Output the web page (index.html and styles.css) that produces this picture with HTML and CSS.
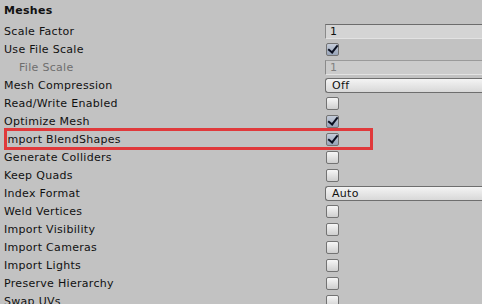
FILE: index.html
```html
<!DOCTYPE html>
<html lang="en">
<head>
    <meta charset="UTF-8">
    <title>Meshes</title>
    <link rel="stylesheet" href="styles.css">
</head>
<body>
    <div class="inspector">
        <div class="header">Meshes</div>

        <div class="row">
            <span class="label">Scale Factor</span>
            <div class="field">1</div>
        </div>
        <div class="row">
            <span class="label">Use File Scale</span>
            <span class="check on"></span>
        </div>
        <div class="row">
            <span class="label sub">File Scale</span>
            <div class="field disabled">1</div>
        </div>
        <div class="row">
            <span class="label">Mesh Compression</span>
            <div class="popup">Off</div>
        </div>
        <div class="row">
            <span class="label">Read/Write Enabled</span>
            <span class="check"></span>
        </div>
        <div class="row">
            <span class="label">Optimize Mesh</span>
            <span class="check on"></span>
        </div>
        <div class="row marked">
            <span class="label">Import BlendShapes</span>
            <span class="check on"></span>
            <span class="highlight"></span>
        </div>
        <div class="row">
            <span class="label">Generate Colliders</span>
            <span class="check"></span>
        </div>
        <div class="row">
            <span class="label">Keep Quads</span>
            <span class="check"></span>
        </div>
        <div class="row">
            <span class="label">Index Format</span>
            <div class="popup">Auto</div>
        </div>
        <div class="row">
            <span class="label">Weld Vertices</span>
            <span class="check"></span>
        </div>
        <div class="row">
            <span class="label">Import Visibility</span>
            <span class="check"></span>
        </div>
        <div class="row">
            <span class="label">Import Cameras</span>
            <span class="check"></span>
        </div>
        <div class="row">
            <span class="label">Import Lights</span>
            <span class="check"></span>
        </div>
        <div class="row">
            <span class="label">Preserve Hierarchy</span>
            <span class="check"></span>
        </div>
        <div class="row">
            <span class="label">Swap UVs</span>
            <span class="check"></span>
        </div>
    </div>
</body>
</html>
```

FILE: styles.css
```css
body {
    margin: 0;
    background-color: #c2c2c2;
    font-family: "DejaVu Sans", Verdana, sans-serif;
    font-size: 11px;
    letter-spacing: 0.3px;
    color: #111;
    overflow: hidden;
}

.inspector {
    padding: 2px 0 0 4px;
}

.header {
    height: 20px;
    line-height: 18px;
    font-weight: bold;
}

.row {
    position: relative;
    display: grid;
    grid-template-columns: 321px 1fr;
    align-items: center;
    height: 18px;
}

.label {
    white-space: nowrap;
}

.label.sub {
    padding-left: 15px;
    color: #6e6e6e;
}

.field {
    height: 13px;
    line-height: 13px;
    padding-left: 4px;
    background: #d4d4d4;
    border-top: 1px solid #6c6c6c;
    border-bottom: 1px solid #e2e2e2;
    border-left: 1px solid #8a8a8a;
    margin-right: -4px;
}

.field.disabled {
    color: #808080;
    background: #cbcbcb;
    border-top-color: #9a9a9a;
}

.popup {
    height: 13px;
    line-height: 13px;
    padding-left: 6px;
    background: linear-gradient(#f4f4f4, #d8d8d8);
    border: 1px solid #6e6e6e;
    border-right: none;
    border-radius: 3px 0 0 3px;
    margin-right: -4px;
}

.check {
    width: 11px;
    height: 11px;
    margin-left: 1px;
    border: 1px solid #737373;
    border-radius: 2px;
    background: linear-gradient(#f6f6f6, #cfcfcf);
    position: relative;
}

.check.on {
    background: linear-gradient(#c4cbd8, #98a4b8);
}

.check.on::after {
    content: "";
    position: absolute;
    left: 3px;
    top: -1px;
    width: 4px;
    height: 8px;
    border: solid #0b1020;
    border-width: 0 2px 2px 0;
    transform: rotate(38deg);
}

.highlight {
    position: absolute;
    left: 0;
    top: -2px;
    width: 363px;
    height: 16px;
    border: 3px solid #e0393b;
    pointer-events: none;
}
```
